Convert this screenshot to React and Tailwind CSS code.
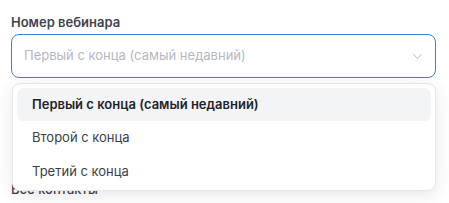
import React from 'react';
import { ChevronDown } from 'lucide-react';

const options = [
  'Первый с конца (самый недавний)',
  'Второй с конца',
  'Третий с конца',
];

export default function App() {
  return (
    <div className="w-[449px] h-[203px] bg-white overflow-hidden px-[11px] pt-[14px] font-['Inter',sans-serif] text-[#374151]">
      <div className="w-[425px]">
        <label className="block text-[13px] leading-4 font-semibold text-[#3f4450]">Номер вебинара</label>
        <div className="relative mt-1">
          <button className="w-full h-[44px] flex items-center justify-between pl-3 pr-[10px] rounded-lg border border-[#3b7cf0] bg-white text-left">
            <span className="text-[13px] text-[#b4b8bf]">Первый с конца (самый недавний)</span>
            <ChevronDown size={15} strokeWidth={1.4} className="text-[#a8adb5]" />
          </button>

          {/* open listbox */}
          <div className="absolute z-10 left-px right-0 top-[49px] rounded-lg border border-[#e5e7eb] bg-white px-1 pt-1 pb-px shadow-[0_4px_18px_rgba(0,0,0,0.1)]">
            {options.map((opt, i) => (
              <div
                key={opt}
                className={
                  i === 0
                    ? 'h-[33px] flex items-center px-[15px] rounded-md bg-[#f3f4f6] text-[13px] font-semibold text-[#1f2328]'
                    : 'h-[34px] flex items-center px-[15px] rounded-md text-[13px] text-[#3a3f47]'
                }
              >
                {opt}
              </div>
            ))}
          </div>
        </div>
        <p className="mt-[103px] text-[13px] leading-4 font-medium text-[#3f4450]">Все контакты</p>
      </div>
    </div>
  );
}
